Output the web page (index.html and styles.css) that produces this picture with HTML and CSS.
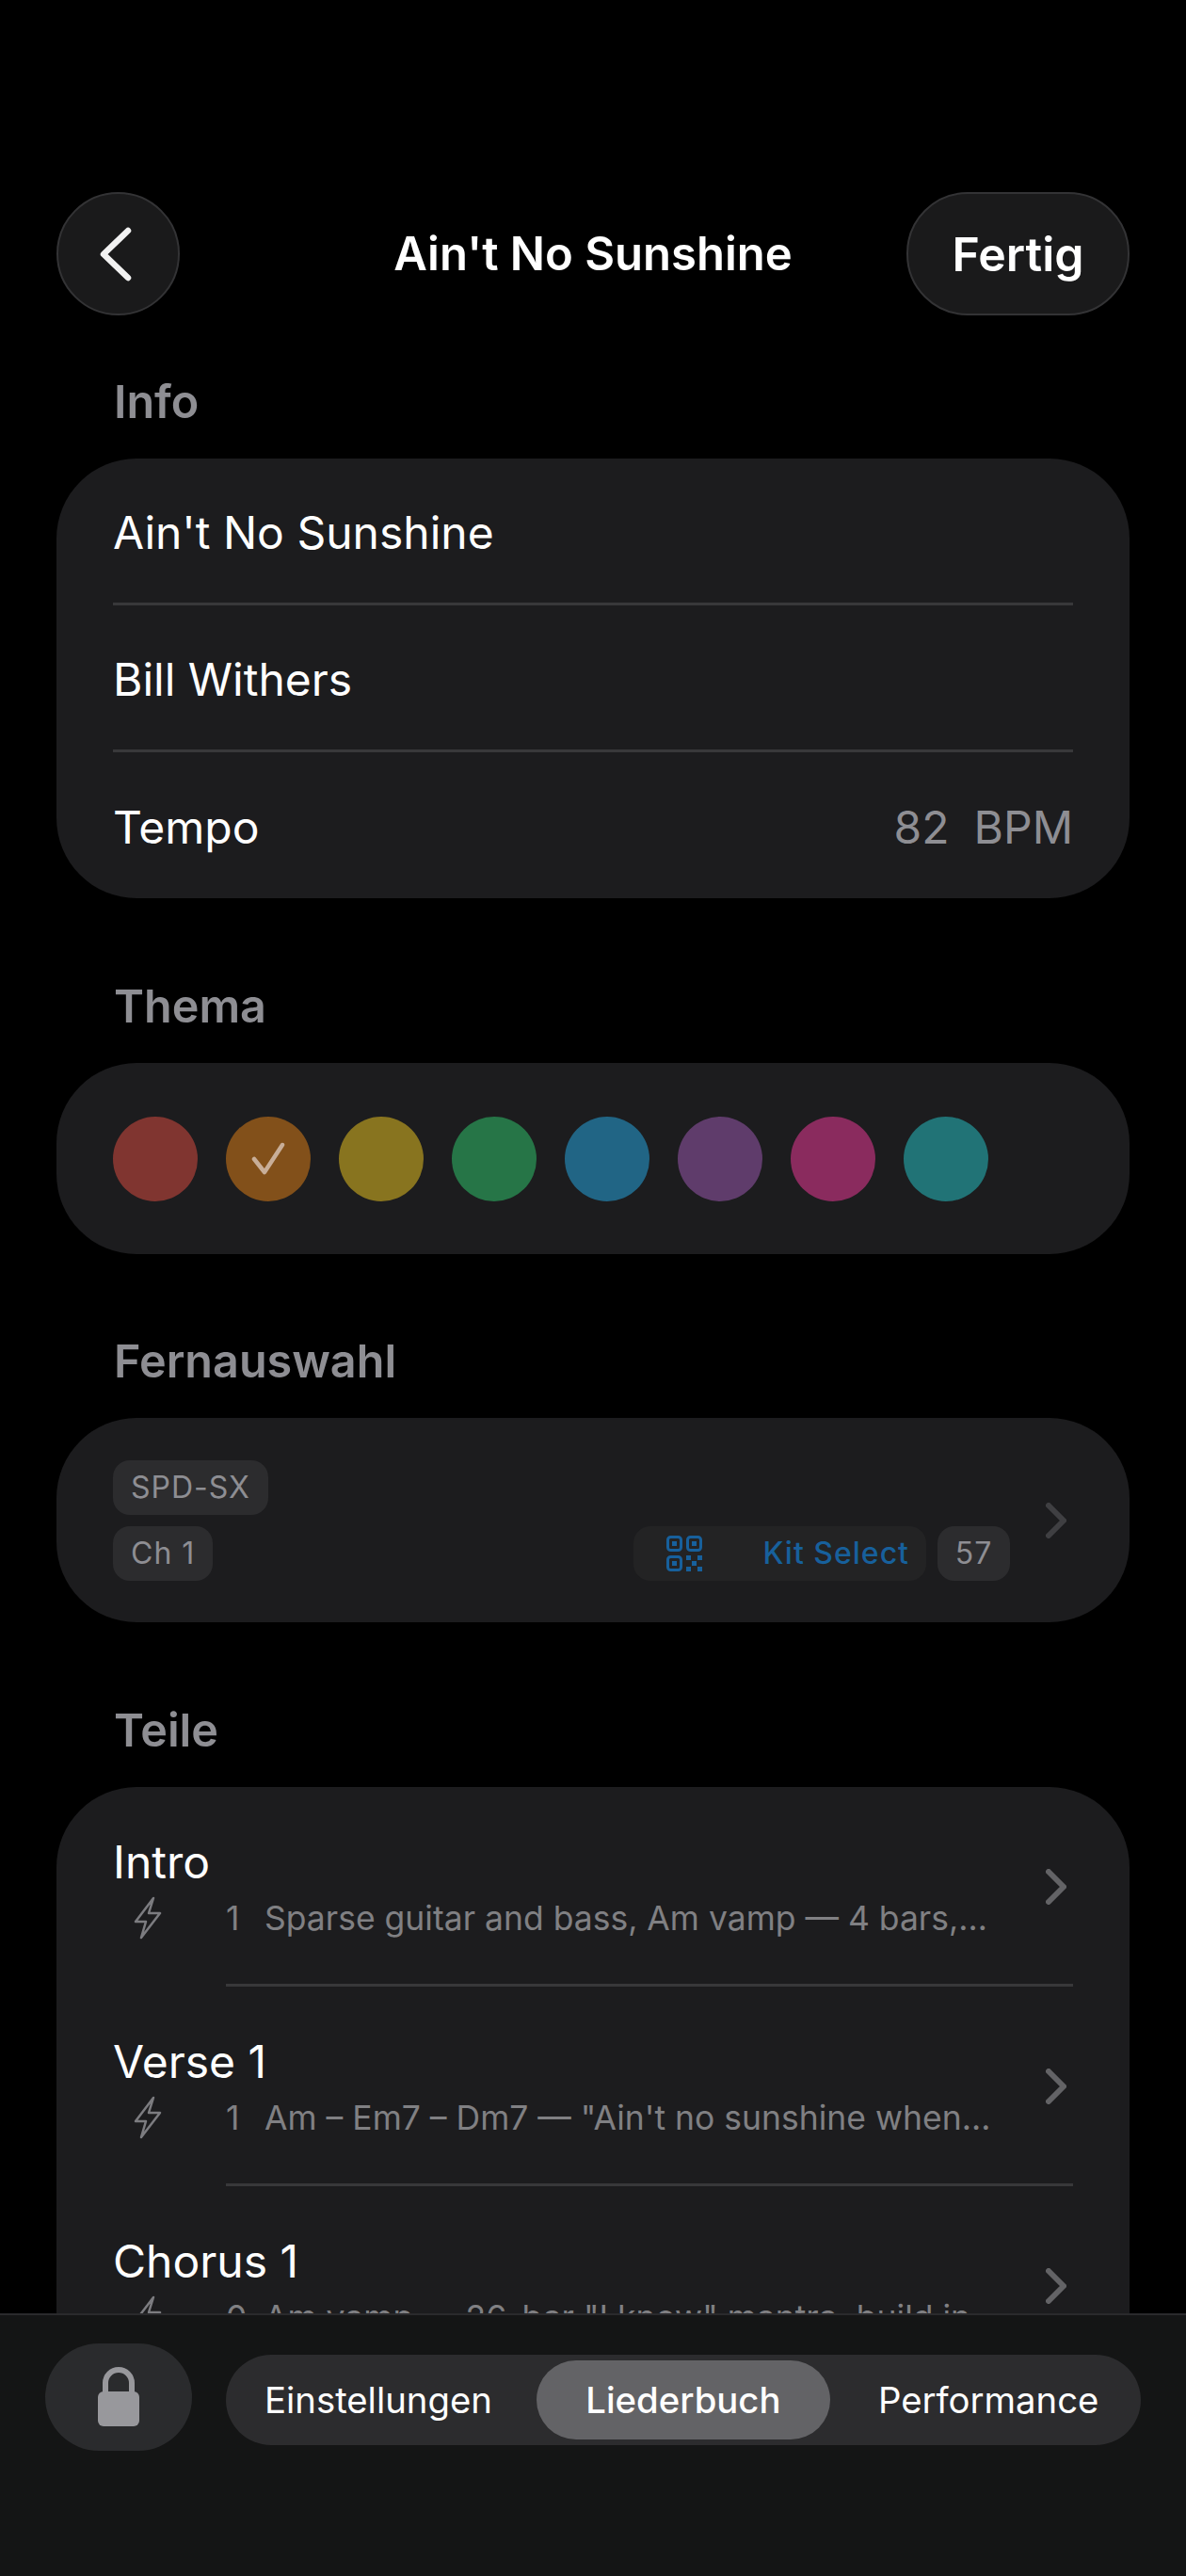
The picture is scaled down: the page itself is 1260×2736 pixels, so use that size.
FILE: index.html
```html
<!DOCTYPE html>
<html lang="de">
  <head>
    <meta charset="UTF-8" />
    <meta name="viewport" content="width=device-width, initial-scale=1.0" />
    <title>Ain't No Sunshine</title>
    <link rel="stylesheet" href="styles.css">
  </head>
  <body>
    <main>
      <header>
        <button class="back" aria-label="Zurück">
          <svg width="40" height="60" viewBox="0 0 40 60"><path d="M33 5 7 30l26 25" /></svg>
        </button>
        <h1>Ain't No Sunshine</h1>
        <button class="done">Fertig</button>
      </header>

      <h2>Info</h2>
      <section class="card">
        <div class="row">Ain't No Sunshine</div>
        <div class="row">Bill Withers</div>
        <div class="row">
          <span>Tempo</span>
          <span class="tempo"><span>82</span><span>BPM</span></span>
        </div>
      </section>

      <h2>Thema</h2>
      <section class="card swatches">
        <i class="red"></i>
        <i class="orange">
          <svg width="36" height="36" viewBox="0 0 36 36"><path d="M3 18l11 14L33 3" /></svg>
        </i>
        <i class="yellow"></i>
        <i class="green"></i>
        <i class="blue"></i>
        <i class="purple"></i>
        <i class="pink"></i>
        <i class="teal"></i>
      </section>

      <h2>Fernauswahl</h2>
      <section class="card remote">
        <div class="remote-body">
          <span class="tag">SPD-SX</span>
          <div class="remote-line">
            <span class="tag">Ch 1</span>
            <span class="kit">
              <svg width="38" height="38" viewBox="0 0 38 38">
                <rect x="1.5" y="1.5" width="14" height="14" rx="3" />
                <rect x="22.5" y="1.5" width="14" height="14" rx="3" />
                <rect x="1.5" y="22.5" width="14" height="14" rx="3" />
                <path class="fill" d="M6 6h5v5H6zM27 6h5v5h-5zM6 27h5v5H6zM21 21h5v5h-5zM33 21h5v5h-5zM27 27h5v5h-5zM21 33h5v5h-5zM33 33h5v5h-5z" />
              </svg>
              <span>Kit Select</span>
            </span>
            <span class="tag num">57</span>
          </div>
        </div>
        <svg class="chevron dim" width="22" height="38" viewBox="0 0 22 38"><path d="M3 3l16 16L3 35" /></svg>
      </section>

      <h2>Teile</h2>
      <section class="card parts">
        <div class="part">
          <div class="part-body">
            <div class="part-name">Intro</div>
            <div class="part-sub">
              <svg class="bolt" width="30" height="46" viewBox="0 0 30 46"><path d="M21 2 2 27h11L8 44l20-26H16z" /></svg>
              <span class="count">1</span>
              <span class="desc">Sparse guitar and bass, Am vamp — 4 bars,…</span>
            </div>
          </div>
          <svg class="chevron" width="22" height="38" viewBox="0 0 22 38"><path d="M3 3l16 16L3 35" /></svg>
        </div>
        <div class="part">
          <div class="part-body">
            <div class="part-name">Verse 1</div>
            <div class="part-sub">
              <svg class="bolt" width="30" height="46" viewBox="0 0 30 46"><path d="M21 2 2 27h11L8 44l20-26H16z" /></svg>
              <span class="count">1</span>
              <span class="desc">Am – Em7 – Dm7 — "Ain't no sunshine when…</span>
            </div>
          </div>
          <svg class="chevron" width="22" height="38" viewBox="0 0 22 38"><path d="M3 3l16 16L3 35" /></svg>
        </div>
        <div class="part">
          <div class="part-body">
            <div class="part-name">Chorus 1</div>
            <div class="part-sub">
              <svg class="bolt" width="30" height="46" viewBox="0 0 30 46"><path d="M21 2 2 27h11L8 44l20-26H16z" /></svg>
              <span class="count">0</span>
              <span class="desc">Am vamp — 26-bar "I know" mantra, build in…</span>
            </div>
          </div>
          <svg class="chevron" width="22" height="38" viewBox="0 0 22 38"><path d="M3 3l16 16L3 35" /></svg>
        </div>
      </section>
    </main>

    <footer>
      <button class="lock" aria-label="Sperren">
        <svg width="44" height="63" viewBox="0 0 44 63">
          <path class="shackle" d="M8 30V17a14 14 0 0 1 28 0v13" />
          <rect x="0" y="26" width="44" height="37" rx="6" />
        </svg>
      </button>
      <nav>
        <a>Einstellungen</a>
        <a class="active">Liederbuch</a>
        <a>Performance</a>
      </nav>
    </footer>
  </body>
</html>
```

FILE: styles.css
```css
* {
  box-sizing: border-box;
}
html,
body {
  margin: 0;
  height: 100%;
}
body {
  font-family: Inter, "Liberation Sans", sans-serif;
  background: #000;
  color: #fff;
  display: flex;
  flex-direction: column;
  height: 2736px;
  overflow: hidden;
}
button {
  font: inherit;
  color: inherit;
  padding: 0;
}
main {
  flex: 1;
  min-height: 0;
  overflow: hidden;
  padding: 204px 60px 0;
}
header {
  display: grid;
  grid-template-columns: 237px 1fr 237px;
  align-items: center;
  height: 131px;
  margin-bottom: 62px;
  h1 {
    font-size: 49px;
    font-weight: 600;
    text-align: center;
    margin: 0;
  }
  button {
    height: 131px;
    background: #1a1a1b;
    border: 2px solid #333335;
  }
}
.back {
  width: 131px;
  border-radius: 50%;
  display: flex;
  align-items: center;
  justify-content: center;
  svg {
    fill: none;
    stroke: #f2f2f2;
    stroke-width: 6.5;
    stroke-linecap: round;
    stroke-linejoin: round;
    margin-right: 6px;
  }
}
.done {
  width: 237px;
  border-radius: 65px;
  font-size: 50px;
  font-weight: 600;
}
h2 {
  font-size: 48.5px;
  line-height: 60px;
  font-weight: 600;
  color: #8e8e93;
  margin: 0 0 30px 61px;
}
.card {
  background: #1c1c1e;
  border-radius: 85px;
  margin-bottom: 85px;
}
.row {
  display: flex;
  justify-content: space-between;
  align-items: center;
  height: 156px;
  margin: 0 60px;
  padding-top: 3px;
  font-size: 48px;
  border-bottom: 3px solid #38383a;
  &:last-child {
    height: 155px;
    border-bottom: 0;
  }
}
.tempo {
  display: flex;
  gap: 26px;
  color: #8e8e93;
}
.swatches {
  display: flex;
  align-items: center;
  gap: 30px;
  height: 203px;
  margin-bottom: 84px;
  padding: 0 60px;
  i {
    display: flex;
    align-items: center;
    justify-content: center;
    width: 90px;
    height: 90px;
    border-radius: 50%;
  }
  svg {
    fill: none;
    stroke: #c8ae98;
    stroke-width: 4.5;
    stroke-linecap: round;
    stroke-linejoin: round;
  }
}
.red { background: #803530; }
.orange { background: #82501a; }
.yellow { background: #88741f; }
.green { background: #267547; }
.blue { background: #216585; }
.purple { background: #5f3c6b; }
.pink { background: #8a2b5e; }
.teal { background: #217376; }
.remote {
  display: flex;
  align-items: center;
  height: 217px;
  padding: 0 67px 0 60px;
}
.remote-body {
  flex: 1;
  display: flex;
  flex-direction: column;
  align-items: flex-start;
  gap: 12px;
  margin-right: 38px;
}
.remote-line {
  display: flex;
  align-self: stretch;
  align-items: center;
  gap: 12px;
  .tag:first-child {
    margin-right: auto;
  }
}
.tag {
  display: flex;
  align-items: center;
  height: 58px;
  padding: 0 19px;
  border-radius: 18px;
  background: #2c2c2e;
  color: #8e8e93;
  font-size: 32px;
  letter-spacing: 1px;
  &.num {
    justify-content: center;
    width: 77px;
    padding: 0;
  }
}
.kit {
  display: flex;
  align-items: center;
  justify-content: space-between;
  width: 311px;
  height: 58px;
  padding: 0 18px 0 35px;
  border-radius: 18px;
  background: #232324;
  color: #17609c;
  font-size: 32px;
  font-weight: 500;
  letter-spacing: 1px;
  svg {
    fill: none;
    stroke: #17609c;
    stroke-width: 3;
    overflow: visible;
  }
  .fill {
    fill: #17609c;
    stroke: none;
  }
}
.chevron {
  flex: none;
  fill: none;
  stroke: #636366;
  stroke-width: 6;
  stroke-linecap: round;
  stroke-linejoin: round;
  &.dim {
    stroke: #3f3f42;
  }
}
.parts {
  height: 900px;
  margin-bottom: 0;
}
.part {
  display: flex;
  align-items: center;
  height: 212px;
  padding: 0 67px 0 60px;
  position: relative;
  &:not(:last-child)::after {
    content: "";
    position: absolute;
    left: 180px;
    right: 60px;
    bottom: 0;
    height: 3px;
    background: #38383a;
  }
}
.part-body {
  flex: 1;
  min-width: 0;
  margin-right: 38px;
}
.part-name {
  font-size: 48px;
  line-height: 60px;
}
.part-sub {
  display: flex;
  align-items: center;
  height: 46px;
  margin-top: 6px;
  color: #808083;
  font-size: 35.5px;
}
.bolt {
  flex: none;
  margin-left: 22px;
  fill: none;
  stroke: #7c7c80;
  stroke-width: 2.5;
  stroke-linejoin: round;
}
.count {
  flex: none;
  width: 41px;
  margin-left: 68px;
}
.desc {
  white-space: nowrap;
}
footer {
  flex: none;
  display: flex;
  align-items: center;
  gap: 36px;
  height: 279px;
  padding: 0 48px 98px;
  background: #141515;
  border-top: 2px solid #2a2a2c;
}
.lock {
  flex: none;
  display: flex;
  align-items: center;
  justify-content: center;
  width: 156px;
  height: 114px;
  margin-bottom: 6px;
  border: 0;
  border-radius: 57px;
  background: #2a2b2d;
  svg {
    fill: #98989c;
  }
  .shackle {
    fill: none;
    stroke: #98989c;
    stroke-width: 6;
  }
}
nav {
  flex: 1;
  display: flex;
  align-items: center;
  height: 96px;
  padding: 6px 0 6px 41px;
  border-radius: 48px;
  background: #2c2c2e;
  font-size: 38.3px;
  .active {
    display: flex;
    align-items: center;
    justify-content: center;
    width: 312px;
    height: 84px;
    margin: 0 51px 0 47px;
    border-radius: 42px;
    background: #636366;
    font-weight: 500;
  }
}
```
